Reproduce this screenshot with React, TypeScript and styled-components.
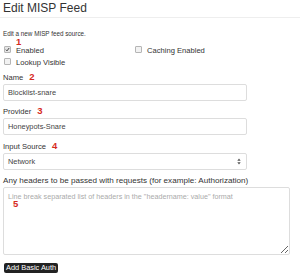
import React from 'react';
import styled, { createGlobalStyle } from 'styled-components';

const GlobalStyle = createGlobalStyle`
  html, body {
    margin: 0;
    padding: 0;
    background: #ffffff;
  }
  body {
    font-family: "Liberation Sans", Arial, sans-serif;
    color: #333333;
  }
`;

function Check ({ checked }: { checked?: boolean }) {
  return (
    <Box $checked={checked}>
      {checked && (
        <svg viewBox="0 0 6 6" width="5" height="5">
          <path d="M1 3.2 L2.4 4.6 L5 1.2" stroke="#333" strokeWidth="1.1" fill="none" />
        </svg>
      )}
    </Box>
  );
}

function App () {
  return (
    <Page>
      <GlobalStyle />
      <Title>Edit MISP Feed</Title>
      <Rule />
      <Intro>Edit a new MISP feed source.</Intro>
      <CheckGrid>
        <CheckRow>
          <Check checked />
          <CheckLabel>Enabled</CheckLabel>
          <Marker $left={13} $top={-10}>1</Marker>
        </CheckRow>
        <CheckRow>
          <Check />
          <CheckLabel>Caching Enabled</CheckLabel>
        </CheckRow>
        <CheckRow>
          <Check />
          <CheckLabel>Lookup Visible</CheckLabel>
        </CheckRow>
      </CheckGrid>

      <Field $top={3}>
        <Label>Name <Number>2</Number></Label>
        <Input defaultValue="Blocklist-snare" />
      </Field>
      <Field $top={4}>
        <Label>Provider <Number>3</Number></Label>
        <Input defaultValue="Honeypots-Snare" />
      </Field>
      <Field $top={5}>
        <Label>Input Source <Number>4</Number></Label>
        <SelectBox>
          <span>Network</span>
          <Arrows viewBox="0 0 6 10" width="4" height="7">
            <path d="M3 0.5 L5.5 4 L0.5 4 Z" fill="#555" />
            <path d="M3 9.5 L5.5 6 L0.5 6 Z" fill="#555" />
          </Arrows>
        </SelectBox>
      </Field>
      <Field $top={4}>
        <Label $size={8.1}>Any headers to be passed with requests (for example: Authorization)</Label>
        <AreaWrap>
          <TextArea placeholder='Line break separated list of headers in the "headername: value" format' />
          <Marker $left={10} $top={11}>5</Marker>
        </AreaWrap>
      </Field>
      <AuthButton>Add Basic Auth</AuthButton>
    </Page>
  );
}

export default App;

const Page = styled.div`
  width: 300px;
  height: 274px;
  overflow: hidden;
  padding: 0 3px;
  box-sizing: border-box;
`;

const Title = styled.h2`
  margin: 0;
  padding-top: 2px;
  font-size: 12px;
  font-weight: 400;
  line-height: 12px;
  color: #333;
`;

const Rule = styled.div`
  height: 1px;
  margin: 3px -3px 0;
  background: #eeeeee;
`;

const Intro = styled.p`
  margin: 12px 0 0;
  font-size: 6.3px;
  line-height: 8px;
`;

const CheckGrid = styled.div`
  display: grid;
  grid-template-columns: 131px 1fr;
  row-gap: 2px;
  margin-top: 8px;
`;

const CheckRow = styled.div`
  position: relative;
  display: flex;
  align-items: center;
  height: 10px;
`;

const Box = styled.span<{ $checked?: boolean }>`
  display: flex;
  align-items: center;
  justify-content: center;
  width: 5px;
  height: 5px;
  margin: -3px 5px 0 1px;
  border: 1px solid #b5b5b5;
  border-radius: 1px;
  background: ${(p) => (p.$checked ? '#e4e4e4' : '#f2f2f2')};
`;

const CheckLabel = styled.span`
  font-size: 7.6px;
  line-height: 10px;
`;

const Marker = styled.span<{ $left: number; $top: number }>`
  position: absolute;
  left: ${(p) => p.$left}px;
  top: ${(p) => p.$top}px;
  font-size: 9.5px;
  font-weight: 700;
  color: #d62a1e;
`;

const Field = styled.div<{ $top: number }>`
  display: flex;
  flex-direction: column;
  margin-top: ${(p) => p.$top}px;
`;

const Label = styled.div<{ $size?: number }>`
  display: flex;
  align-items: flex-end;
  gap: 6px;
  height: 11px;
  font-size: ${(p) => p.$size ?? 7.6}px;
  line-height: 9px;
  margin-bottom: 2px;
  white-space: nowrap;
`;

const Number = styled.span`
  font-size: 9.5px;
  font-weight: 700;
  line-height: 10px;
  color: #d62a1e;
`;

const Input = styled.input`
  width: 244px;
  height: 17px;
  box-sizing: border-box;
  padding: 0 4px;
  border: 1px solid #dddddd;
  border-radius: 2px;
  font-family: "Liberation Sans", Arial, sans-serif;
  font-size: 7.4px;
  color: #444;
  outline: none;
`;

const SelectBox = styled.div`
  display: flex;
  align-items: center;
  justify-content: space-between;
  width: 244px;
  height: 17px;
  box-sizing: border-box;
  padding: 0 4px;
  border: 1px solid #dddddd;
  border-radius: 2px;
  font-size: 7.4px;
  color: #444;
`;

const Arrows = styled.svg`
  margin-right: 1px;
`;

const AreaWrap = styled.div`
  position: relative;
  width: 287px;
`;

const TextArea = styled.textarea`
  display: block;
  width: 287px;
  height: 68px;
  box-sizing: border-box;
  padding: 4px 4px;
  border: 1px solid #dddddd;
  border-radius: 2px;
  font-family: "Liberation Sans", Arial, sans-serif;
  font-size: 7.2px;
  resize: vertical;
  outline: none;
  &::placeholder {
    color: #aaaaaa;
  }
`;

const AuthButton = styled.button`
  display: block;
  margin: 8px 0 0 1px;
  padding: 0 2px;
  height: 10px;
  background: #222222;
  color: #ffffff;
  border: none;
  border-radius: 2px;
  font-family: "Liberation Sans", Arial, sans-serif;
  font-size: 7.4px;
  line-height: 10px;
`;
